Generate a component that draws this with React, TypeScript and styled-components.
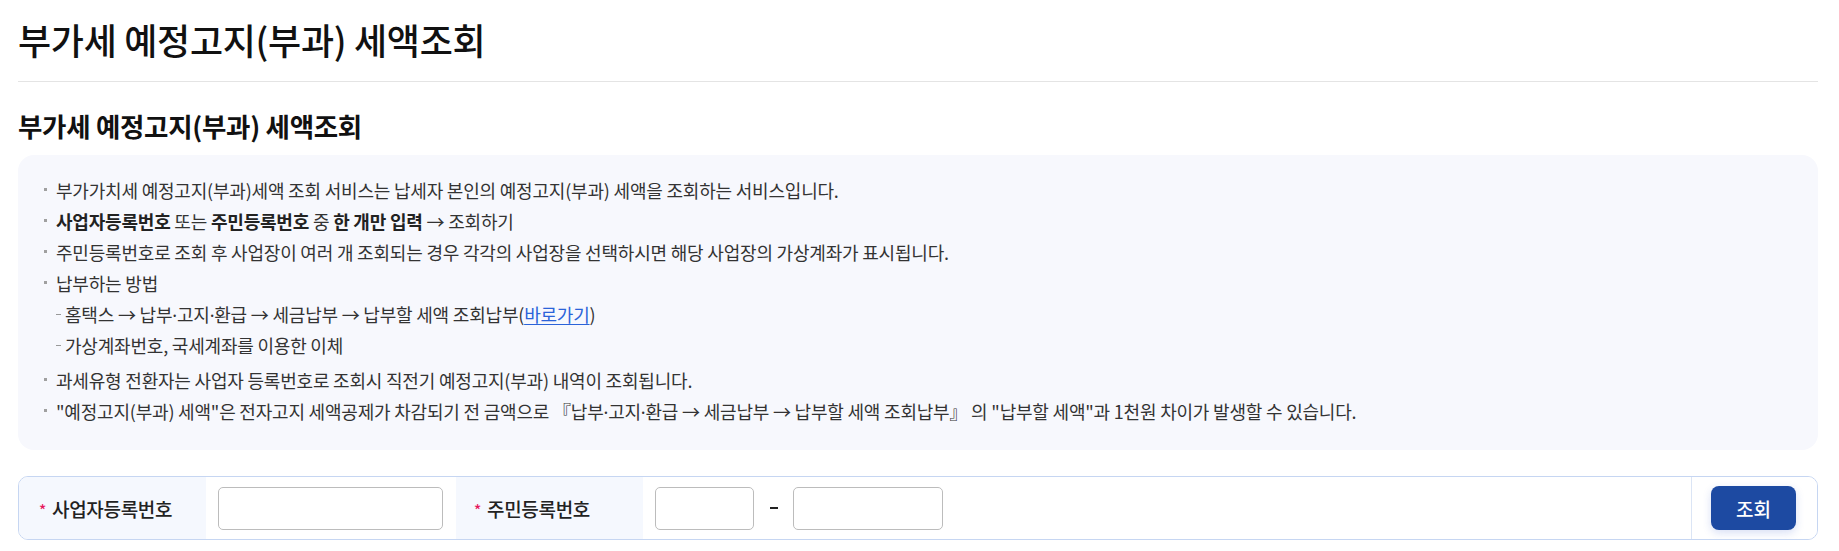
import React from "react";
import styled, { createGlobalStyle } from "styled-components";

const GlobalStyle = createGlobalStyle`
  * { box-sizing: border-box; }
  body {
    margin: 0;
    background: #fff;
    font-family: "Noto Sans CJK KR", "Noto Sans", sans-serif;
    color: #222;
  }
`;

const Page = styled.div`
  padding: 0 21px 24px 18px;
`;

const Header = styled.header`
  padding: 16px 0 19px;
  border-bottom: 1px solid #e4e4e4;
`;

const Title = styled.h1`
  margin: 0;
  font-size: 36px;
  line-height: 46px;
  font-weight: 500;
  color: #111;
  letter-spacing: -0.3px;
`;

const SubTitle = styled.h2`
  margin: 27px 0 12px;
  font-size: 26.5px;
  line-height: 34px;
  font-weight: 700;
  color: #111;
  letter-spacing: -0.3px;
`;

const InfoBox = styled.div`
  background: #f7f8fd;
  border-radius: 16px;
  padding: 20px 24px 22px 26px;
`;

const List = styled.ul`
  margin: 0;
  padding: 0;
  list-style: none;
`;

const Item = styled.li`
  position: relative;
  padding-left: 12px;
  font-size: 18px;
  line-height: 31px;
  color: #333;
  letter-spacing: -0.2px;

  &::before {
    content: "";
    position: absolute;
    left: 0;
    top: 13px;
    width: 3px;
    height: 3px;
    background: #a0a0a0;
  }
`;

const SubList = styled.ul`
  margin: 0 0 5px;
  padding: 0;
  list-style: none;
`;

const SubItem = styled.li`
  position: relative;
  padding-left: 9px;
  font-size: 18px;
  line-height: 30px;
  color: #333;
  letter-spacing: -0.2px;

  &::before {
    content: "";
    position: absolute;
    left: 0;
    top: 15px;
    width: 5px;
    height: 1px;
    background: #999;
  }
`;

const Strong = styled.b`
  font-weight: 700;
  color: #222;
`;

const Dot = styled.span`
  font-family: "Noto Sans", sans-serif;
`;

const Link = styled.a`
  color: #2b63d9;
  text-decoration: underline;
  text-underline-offset: 2px;
`;

const Form = styled.div`
  margin-top: 26px;
  display: flex;
  height: 64px;
  border: 1px solid #c6d6f2;
  border-radius: 10px;
  overflow: hidden;
`;

const Label = styled.div<{ $w: number; $pl: number }>`
  width: ${(p) => p.$w}px;
  flex: none;
  display: flex;
  align-items: center;
  padding-left: ${(p) => p.$pl}px;
  background: #f5f8fe;
  font-size: 19px;
  font-weight: 500;
  color: #222;
  letter-spacing: -0.3px;
`;

const Required = styled.span`
  color: #e6175c;
  font-size: 15px;
  margin-right: 6px;
  position: relative;
  top: 1px;
`;

const Field = styled.div<{ $grow?: boolean }>`
  display: flex;
  align-items: center;
  padding: 0 13px 0 12px;
  flex: ${(p) => (p.$grow ? "1" : "none")};
  background: #fff;
`;

const Input = styled.input<{ $w: number }>`
  width: ${(p) => p.$w}px;
  height: 43px;
  border: 1px solid #bcbcbc;
  border-radius: 5px;
  background: #fff;
  font-size: 16px;
  font-family: inherit;
  padding: 0 10px;
  outline: none;
`;

const Dash = styled.span`
  display: inline-block;
  width: 8px;
  height: 2px;
  background: #222;
  margin: 0 15px 0 16px;
`;

const Action = styled.div`
  width: 126px;
  flex: none;
  display: flex;
  align-items: center;
  padding-left: 19px;
  border-left: 1px solid #dbe5f5;
  background: #fff;
`;

const Button = styled.button`
  width: 85px;
  height: 44px;
  border: none;
  border-radius: 8px;
  background: #1d4aa2;
  color: #fff;
  font-family: inherit;
  font-size: 19px;
  font-weight: 500;
  box-shadow: 0 3px 8px rgba(40, 80, 200, 0.18);
  cursor: pointer;
`;

const D = () => <Dot>·</Dot>;

export default function App() {
  return (
    <>
      <GlobalStyle />
      <Page>
        <Header>
          <Title>부가세 예정고지(부과) 세액조회</Title>
        </Header>
        <SubTitle>부가세 예정고지(부과) 세액조회</SubTitle>
        <InfoBox>
          <List>
            <Item>
              부가가치세 예정고지(부과)세액 조회 서비스는 납세자 본인의 예정고지(부과) 세액을 조회하는 서비스입니다.
            </Item>
            <Item>
              <Strong>사업자등록번호</Strong> 또는 <Strong>주민등록번호</Strong> 중 <Strong>한 개만 입력</Strong> → 조회하기
            </Item>
            <Item>
              주민등록번호로 조회 후 사업장이 여러 개 조회되는 경우 각각의 사업장을 선택하시면 해당 사업장의 가상계좌가 표시됩니다.
            </Item>
            <Item>
              납부하는 방법
              <SubList>
                <SubItem>
                  홈택스 → 납부<D />고지<D />환급 → 세금납부 → 납부할 세액 조회납부(<Link href="#">바로가기</Link>)
                </SubItem>
                <SubItem>가상계좌번호, 국세계좌를 이용한 이체</SubItem>
              </SubList>
            </Item>
            <Item>과세유형 전환자는 사업자 등록번호로 조회시 직전기 예정고지(부과) 내역이 조회됩니다.</Item>
            <Item>
              "예정고지(부과) 세액"은 전자고지 세액공제가 차감되기 전 금액으로 『납부<D />고지<D />환급 → 세금납부 → 납부할 세액 조회납부』 의 "납부할 세액"과 1천원 차이가 발생할 수 있습니다.
            </Item>
          </List>
        </InfoBox>
        <Form>
          <Label $w={187} $pl={20}>
            <Required>*</Required>사업자등록번호
          </Label>
          <Field>
            <Input $w={225} />
          </Field>
          <Label $w={187} $pl={18}>
            <Required>*</Required>주민등록번호
          </Label>
          <Field $grow>
            <Input $w={99} />
            <Dash />
            <Input $w={150} />
          </Field>
          <Action>
            <Button>조회</Button>
          </Action>
        </Form>
      </Page>
    </>
  );
}
